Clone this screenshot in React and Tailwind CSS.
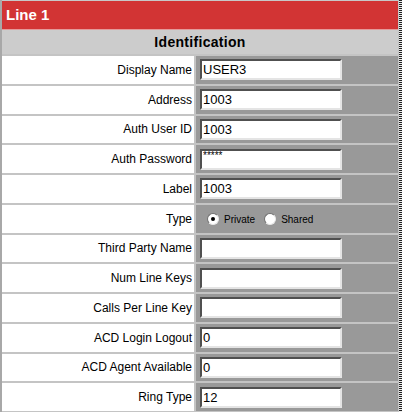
import React from 'react';

const rows = [
    { label: 'Display Name', value: 'USER3' },
    { label: 'Address', value: '1003' },
    { label: 'Auth User ID', value: '1003' },
    { label: 'Auth Password', value: '*****', password: true },
    { label: 'Label', value: '1003' },
    { label: 'Type', radio: true },
    { label: 'Third Party Name', value: '' },
    { label: 'Num Line Keys', value: '' },
    { label: 'Calls Per Line Key', value: '' },
    { label: 'ACD Login Logout', value: '0' },
    { label: 'ACD Agent Available', value: '0' },
    { label: 'Ring Type', value: '12' },
];

const Radio = ({ checked, label }) => (
    <label className="flex items-center">
        <span className="w-[12px] h-[12px] rounded-full bg-white border border-t-[#707070] border-l-[#707070] border-b-[#e8e8e8] border-r-[#e8e8e8] flex items-center justify-center">
            {checked && <span className="w-[4px] h-[4px] rounded-full bg-black"></span>}
        </span>
        <span className="ml-[5px] mt-[2px] text-[10px] text-black">{label}</span>
    </label>
);

const Field = ({ value, password }) => (
    <input
        type="text"
        readOnly
        value={value}
        className={
            'w-[142px] h-[21px] bg-white border-2 border-t-[#505050] border-l-[#505050] border-b-[#e4e4e4] border-r-[#e4e4e4] px-[1px] text-black outline-none ' +
            (password ? 'text-[10px] leading-none pb-[7px]' : 'text-[13px]')
        }
    />
);

export default function App() {
    return (
        <div className="w-[402px] h-[412px] overflow-hidden flex bg-[#a8a8a8] pl-[2px]" style={{ fontFamily: '"Liberation Sans", Arial, sans-serif' }}>
            <div className="w-[396px] flex flex-col">
                {/* Title bar */}
                <div className="h-[30px] border-t border-[#c8c8c8] bg-[#d23434] border-b border-b-[#e49a9a] flex items-center pl-[4px]">
                    <span className="text-white font-bold text-[15px]">Line 1</span>
                </div>
                {/* Section heading */}
                <div className="h-[24px] bg-[#cccccc] flex items-center justify-center">
                    <span className="font-bold text-[14px] tracking-[0.3px] text-black">Identification</span>
                </div>
                {/* Rows */}
                <div className="flex-1 bg-[#c4c4c4] pt-[2px] pb-[1px] grid grid-rows-[repeat(12,1fr)] gap-y-[2px]">
                    {rows.map((row) => (
                        <div key={row.label} className="flex gap-x-[2px]">
                            <div className="w-[192px] bg-white flex items-center justify-end pr-[2px] text-[12px] text-black">
                                {row.label}
                            </div>
                            <div className="flex-1 bg-[#999999] flex items-center pl-[4px]">
                                {row.radio ? (
                                    <div className="flex items-center gap-x-[9px] pl-[7px]">
                                        <Radio checked label="Private" />
                                        <Radio label="Shared" />
                                    </div>
                                ) : (
                                    <Field value={row.value} password={row.password} />
                                )}
                            </div>
                        </div>
                    ))}
                </div>
            </div>
            <div className="w-[1px] bg-[#c4c4c4]"></div>
            <div className="w-[3px] bg-[repeating-linear-gradient(to_bottom,#222_0px,#222_1px,#eee_1px,#eee_2px)]"></div>
        </div>
    );
}
